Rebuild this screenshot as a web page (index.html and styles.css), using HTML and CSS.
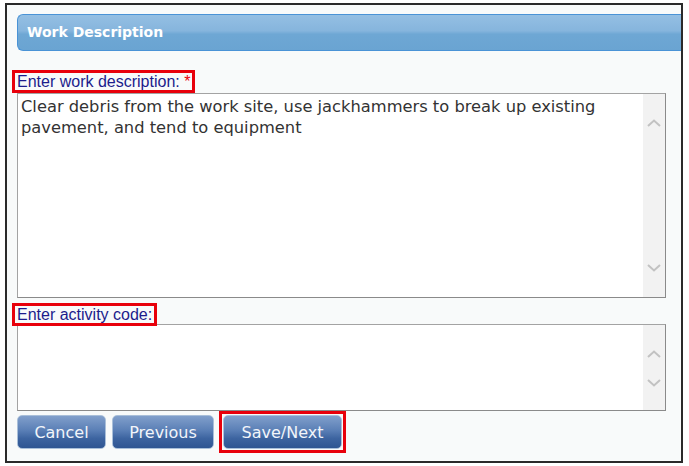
FILE: index.html
```html
<!DOCTYPE html>
<html lang="en">
<head>
    <meta charset="UTF-8">
    <title>Work Description</title>
    <link rel="stylesheet" href="styles.css">
</head>
<body>
    <div id="container">
        <div class="panel-header">Work Description</div>

        <div class="field">
            <label class="field-label marked" for="work-desc">Enter work description: <span class="req">*</span></label>
            <div class="text-box tall">
                <textarea id="work-desc" class="text-input">Clear debris from the work site, use jackhammers to break up existing pavement, and tend to equipment</textarea>
                <div class="scroll-strip">
                    <svg class="chev" viewBox="0 0 14 8"><path d="M1 7 L7 1.5 L13 7"/></svg>
                    <svg class="chev" viewBox="0 0 14 8"><path d="M1 1 L7 6.5 L13 1"/></svg>
                </div>
            </div>
        </div>

        <div class="field second">
            <label class="field-label marked" for="activity">Enter activity code:</label>
            <div class="text-box short">
                <textarea id="activity" class="text-input"></textarea>
                <div class="scroll-strip">
                    <svg class="chev" viewBox="0 0 14 8"><path d="M1 7 L7 1.5 L13 7"/></svg>
                    <svg class="chev" viewBox="0 0 14 8"><path d="M1 1 L7 6.5 L13 1"/></svg>
                </div>
            </div>
        </div>

        <div class="button-row">
            <button class="btn btn-cancel">Cancel</button>
            <button class="btn btn-prev">Previous</button>
            <span class="btn-wrap marked"><button class="btn btn-next">Save/Next</button></span>
        </div>
    </div>
</body>
</html>
```

FILE: styles.css
```css
body {
    margin: 0;
    background-color: #fff;
    font-family: 'Liberation Sans', Arial, sans-serif;
}

#container {
    margin: 3px 0 0 5px;
    width: 664px;
    height: 456px;
    border: 2px solid #2a2a2a;
    background-color: #f8fafa;
    padding: 0 0 0 10px;
}

.panel-header {
    margin-top: 9px;
    height: 35px;
    line-height: 35px;
    border: 1px solid #4a93d6;
    border-right: none;
    border-radius: 6px 0 0 6px;
    background: linear-gradient(to bottom, #94bfe3 0%, #86b5dd 45%, #6ea7d4 55%, #6aa4d2 100%);
    color: #fff;
    font-family: 'DejaVu Sans', Verdana, sans-serif;
    font-weight: bold;
    font-size: 14px;
    padding-left: 9px;
}

.field {
    margin-top: 22px;
}

.field.second {
    margin-top: 8px;
}

.field-label {
    display: inline-block;
    margin-left: -2px;
    padding: 0 2px;
    height: 17px;
    line-height: 17px;
    font-size: 16px;
    color: #1c1c8c;
    vertical-align: top;
}

.marked {
    outline: 3px solid #e8000b;
}

.req {
    color: #e8000b;
}

.text-box {
    display: flex;
    width: 647px;
    border: 1px solid #a3a3a3;
    border-right-color: #8a8a8a;
    border-bottom-color: #8a8a8a;
    background-color: #fff;
}

.text-box.tall {
    margin-top: 2px;
    height: 203px;
}

.text-box.short {
    margin-top: 0;
    height: 85px;
}

.text-input {
    flex: 1;
    border: none;
    outline: none;
    resize: none;
    background: transparent;
    font-family: 'DejaVu Sans', Verdana, sans-serif;
    font-size: 16.3px;
    line-height: 21px;
    color: #333;
    padding: 2px 3px;
    overflow: hidden;
}

.scroll-strip {
    width: 22px;
    background-color: #f2f2f2;
    display: flex;
    flex-direction: column;
    align-items: center;
}

.tall .scroll-strip {
    justify-content: space-between;
    padding: 25px 0 25px;
}

.short .scroll-strip {
    justify-content: flex-start;
    gap: 21px;
    padding-top: 25px;
}

.chev {
    width: 14px;
    height: 8px;
    fill: none;
    stroke: #c2c2c2;
    stroke-width: 2;
}

.button-row {
    display: flex;
    align-items: flex-start;
    margin-top: 4px;
}

.btn {
    height: 34px;
    border: 1px solid #a9bfd9;
    border-radius: 5px;
    background: linear-gradient(to bottom, #819fcb 0%, #5a7fb6 45%, #3d64a0 70%, #2e5592 100%);
    color: #f2f5fa;
    font-family: 'DejaVu Sans', Verdana, sans-serif;
    font-size: 16px;
    padding: 0;
    cursor: pointer;
    display: block;
}

.btn-cancel {
    width: 89px;
}

.btn-prev {
    width: 102px;
    margin-left: 6px;
}

.btn-wrap {
    display: block;
    margin-left: 9px;
    outline-offset: 1px;
}

.btn-next {
    width: 119px;
}
```
